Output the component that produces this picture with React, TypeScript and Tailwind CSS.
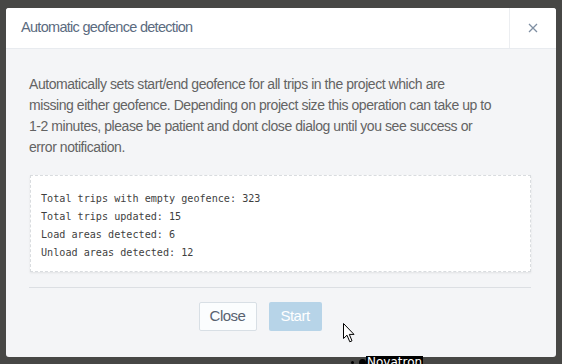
import React from "react";

export default function App() {
  return (
    <div className="relative w-[562px] h-[364px] bg-[#474745] overflow-hidden pl-[6px] pt-[8px]" style={{ fontFamily: '"Liberation Sans", Arial, sans-serif' }}>
      <div className="w-[550px] h-[349px] rounded-[3px] bg-[#f4f5f7] flex flex-col overflow-hidden">
        <div className="h-[41px] bg-white border-b border-[#e8ebef] flex items-stretch">
          <div className="flex-1 flex items-center pl-[15px] text-[14.5px] tracking-[-0.7px] text-[#5b6b80]">Automatic geofence detection</div>
          <div className="w-[47px] border-l border-[#eceef1] flex items-center justify-center">
            <svg width="10" height="10" viewBox="0 0 10 10">
              <path d="M1 1 L9 9 M9 1 L1 9" stroke="#7f8fa3" strokeWidth="1.3" />
            </svg>
          </div>
        </div>
        <div className="pl-[23px] pr-[25px] pt-[25px]">
          <p className="whitespace-nowrap text-[14px] leading-[21px] tracking-[-0.44px] text-[#636363]">
            Automatically sets start/end geofence for all trips in the project which are
            <br />
            missing either geofence. Depending on project size this operation can take up to
            <br />
            1-2 minutes, please be patient and dont close dialog until you see success or
            <br />
            error notification.
          </p>
          <div className="mt-[17px] ml-[1px] bg-white border border-dashed border-[#d9dcdf] shadow-[0_1px_2px_rgba(0,0,0,0.08)] pl-[10px] pt-[14px] pb-[9px] text-[10.15px] leading-[18px] text-[#3f3f3f]" style={{ fontFamily: '"DejaVu Sans Mono", monospace' }}>
            <div>Total trips with empty geofence: 323</div>
            <div>Total trips updated: 15</div>
            <div>Load areas detected: 6</div>
            <div>Unload areas detected: 12</div>
          </div>
          <div className="mt-[15px] h-px bg-[#dcdfe3]" />
          <div className="flex justify-center gap-[12px] pt-[14px] pr-[40px]">
            <button className="w-[58px] h-[29px] bg-[#fbfdfe] border border-[#d8dfe5] rounded-[2px] text-[15px] tracking-[-0.5px] text-[#596270]">Close</button>
            <button className="w-[53px] h-[29px] bg-[#b7d4e8] rounded-[2px] text-[15px] tracking-[-0.5px] text-white">Start</button>
          </div>
        </div>
      </div>
      <svg className="absolute left-[343px] top-[323px]" width="14" height="21" viewBox="0 0 14 21">
        <path d="M0.5 0.5 L0.5 15.5 L4 12.2 L6.8 18.8 L9 17.8 L6.3 11.4 L11 11.4 Z" fill="white" stroke="black" strokeWidth="1" strokeLinejoin="round" />
      </svg>
      <div className="absolute left-[351px] top-[356px] flex items-center text-[12px] leading-[12px]" style={{ fontFamily: '"DejaVu Sans", sans-serif' }}>
        <span className="w-[3px] h-[3px] rounded-full bg-black mr-[5px]" />
        <span className="w-[7px] h-[7px] rounded-full bg-black" />
        <span className="bg-black text-white px-[1px]">Novatron</span>
      </div>
    </div>
  );
}
